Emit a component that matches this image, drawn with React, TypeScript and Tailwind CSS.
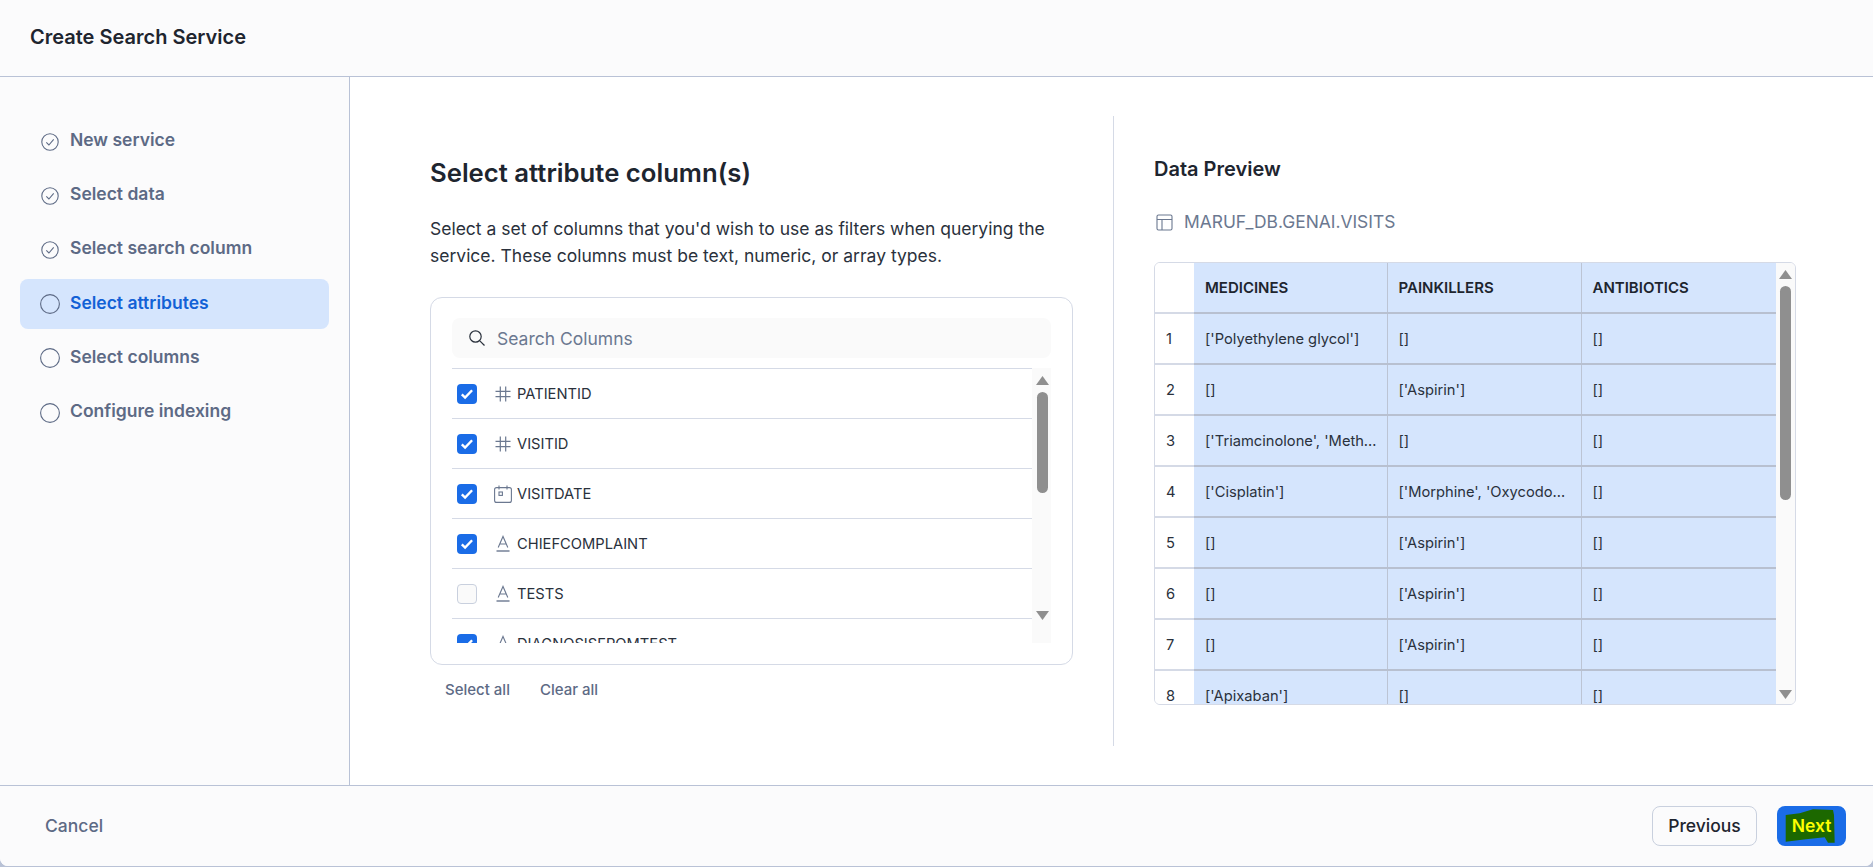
const sans = "font-['Inter',sans-serif]";

const steps = [
  { label: "New service", done: true },
  { label: "Select data", done: true },
  { label: "Select search column", done: true },
  { label: "Select attributes", active: true },
  { label: "Select columns" },
  { label: "Configure indexing" },
];

const columns = [
  { name: "PATIENTID", type: "num", checked: true },
  { name: "VISITID", type: "num", checked: true },
  { name: "VISITDATE", type: "date", checked: true },
  { name: "CHIEFCOMPLAINT", type: "text", checked: true },
  { name: "TESTS", type: "text", checked: false },
  { name: "DIAGNOSISFROMTEST", type: "text", checked: true },
];

const rows = [
  ["['Polyethylene glycol']", "[]", "[]"],
  ["[]", "['Aspirin']", "[]"],
  ["['Triamcinolone', 'Methylprednisolone']", "[]", "[]"],
  ["['Cisplatin']", "['Morphine', 'Oxycodone']", "[]"],
  ["[]", "['Aspirin']", "[]"],
  ["[]", "['Aspirin']", "[]"],
  ["[]", "['Aspirin']", "[]"],
  ["['Apixaban']", "[]", "[]"],
];

function StepIcon({ done }: { done?: boolean }) {
  if (done) {
    return (
      <svg width="20" height="20" viewBox="0 0 20 20" fill="none" className="mt-[3px] shrink-0">
        <circle cx="10" cy="10" r="8.2" stroke="#5d6a85" strokeWidth="1.1" />
        <path d="M6.3 10.4l2.6 2.6 4.8-5.6" stroke="#5d6a85" strokeWidth="1.1" />
      </svg>
    );
  }
  return (
    <svg width="20" height="20" viewBox="0 0 20 20" fill="none" className="mt-[3px] shrink-0">
      <circle cx="10" cy="10" r="9.4" stroke="#5d6a85" strokeWidth="1.1" />
    </svg>
  );
}

function ColumnIcon({ type }: { type: string }) {
  if (type === "num") {
    return (
      <svg width="18" height="18" viewBox="0 0 18 18" fill="none" stroke="#6b7890" strokeWidth="1.2">
        <path d="M6.3 1.5v15M11.7 1.5v15M1.5 6.3h15M1.5 11.7h15" />
      </svg>
    );
  }
  if (type === "date") {
    return (
      <svg width="18" height="18" viewBox="0 0 18 18" fill="none" stroke="#6b7890" strokeWidth="1.1">
        <rect x="0.6" y="2.6" width="16.8" height="14.8" rx="2" />
        <path d="M5 0.5v4M13 0.5v4" />
        <rect x="5" y="7" width="3.4" height="3.4" />
      </svg>
    );
  }
  return (
    <svg width="18" height="18" viewBox="0 0 18 18" fill="none" stroke="#6b7890" strokeWidth="1.1">
      <path d="M4.2 12.5L9 1.5l4.8 11M5.8 9h6.4" />
      <path d="M2.5 16h13" strokeWidth="1.4" />
    </svg>
  );
}

function Checkbox({ checked }: { checked: boolean }) {
  if (!checked) {
    return <span className="h-5 w-5 shrink-0 rounded-[4px] border border-[#c9d0de] bg-[#fafafa]" />;
  }
  return (
    <span className="flex h-5 w-5 shrink-0 items-center justify-center rounded-[4px] bg-[#1a6ce7]">
      <svg width="16" height="16" viewBox="0 0 16 16" fill="none" stroke="white" strokeWidth="2.4">
        <path d="M2.8 8.4l3.3 3.2 7-7.4" />
      </svg>
    </span>
  );
}

interface ScrollbarProps {
  left: number;
  arrowTop: number;
  thumbTop: number;
  thumbHeight: number;
  downBottom: number;
}

function Scrollbar({ left, arrowTop, thumbTop, thumbHeight, downBottom }: ScrollbarProps) {
  return (
    <div className="relative h-full w-[19px] shrink-0 bg-[#fafafa]">
      <svg width="13" height="9" viewBox="0 0 13 9" className="absolute" style={{ left, top: arrowTop }}>
        <path d="M6.5 0L13 9H0z" fill="#8f8f8f" />
      </svg>
      <div
        className="absolute w-[11px] rounded-full bg-[#8f8f8f]"
        style={{ left: left + 1, top: thumbTop, height: thumbHeight }}
      />
      <svg width="13" height="9" viewBox="0 0 13 9" className="absolute" style={{ left, bottom: downBottom }}>
        <path d="M0 0h13L6.5 9z" fill="#8f8f8f" />
      </svg>
    </div>
  );
}

function ColumnPicker() {
  return (
    <div>
      <div className="h-[368px] rounded-xl border border-[#d5dae6] px-[21px] pt-5">
        <div className="flex h-10 items-center gap-[11px] rounded-lg bg-[#fafafa] pl-4">
          <svg width="18" height="18" viewBox="0 0 18 18" fill="none" stroke="#2a313c" strokeWidth="1.2">
            <circle cx="7.5" cy="7.5" r="5.7" />
            <path d="M11.8 11.8l4.7 4.7" />
          </svg>
          <span className="mt-[2px] text-[17.5px] text-[#6b7890]">Search Columns</span>
        </div>
        <div className="mt-[10px] flex h-[275px] overflow-hidden">
          <div className="min-w-0 flex-1">
            {columns.map((c) => (
              <div key={c.name} className="flex h-[50px] items-center border-t border-[#d5dae6] pl-[5px]">
                <Checkbox checked={c.checked} />
                <span className="ml-[17px] flex w-[18px] justify-center">
                  <ColumnIcon type={c.type} />
                </span>
                <span className="mt-[2px] ml-[5px] text-[14.7px] text-[#2a313c]">{c.name}</span>
              </div>
            ))}
          </div>
          <Scrollbar left={4} arrowTop={8} thumbTop={24} thumbHeight={101} downBottom={23} />
        </div>
      </div>
      <div className="mt-[14px] flex gap-[30px] pl-[15px] text-[15px] font-medium text-[#5d6a85]">
        <span>Select all</span>
        <span>Clear all</span>
      </div>
    </div>
  );
}

function DataTable() {
  return (
    <div className="flex h-[443px] w-[642px] overflow-hidden rounded-md border border-[#d5dae6]">
      <div className="min-w-0 flex-1 overflow-hidden">
        <table className="w-[621px] table-fixed border-collapse text-[14.7px] text-[#2a313c]">
          <colgroup>
            <col className="w-[39px]" />
            <col className="w-[193px]" />
            <col className="w-[194px]" />
            <col className="w-[195px]" />
          </colgroup>
          <thead>
            <tr className="h-[50px]">
              <th className="border-b-2 border-[#d5dae6] bg-white" />
              {["MEDICINES", "PAINKILLERS", "ANTIBIOTICS"].map((h) => (
                <th
                  key={h}
                  className="border-r border-b-2 border-r-[#bcc4d4] border-b-[#b8c0d0] bg-[#d5e5fd] px-[11px] pt-[2px] text-left text-[15px] font-semibold text-[#1e252f] last:border-r-0"
                >
                  {h}
                </th>
              ))}
            </tr>
          </thead>
          <tbody>
            {rows.map((row, i) => (
              <tr key={i} className="h-[51px]">
                <td className="border-b-2 border-[#d5dae6] bg-white pt-[2px] pl-[11px]">{i + 1}</td>
                {row.map((cell, j) => (
                  <td
                    key={j}
                    className={`truncate border-r border-b-2 border-r-[#bcc4d4] border-b-[#b8c0d0] bg-[#d5e5fd] pt-[2px] pl-[11px] last:border-r-0 ${
                      j === 0 ? "pr-[8px]" : "pr-[11px]"
                    }`}
                  >
                    {cell}
                  </td>
                ))}
              </tr>
            ))}
          </tbody>
        </table>
      </div>
      <Scrollbar left={3} arrowTop={7} thumbTop={23} thumbHeight={214} downBottom={5} />
    </div>
  );
}

export default function App() {
  return (
    <div className={`flex h-[867px] w-[1873px] flex-col overflow-hidden bg-[#b9c2d6] pb-[1px] ${sans}`}>
      <div className="flex flex-1 flex-col overflow-hidden rounded-b-lg bg-white">
        <header className="flex h-[77px] shrink-0 items-center border-b border-[#b9c2d6] bg-[#fbfbfc] pb-[3px] pl-[30px]">
          <h1 className="text-xl font-semibold text-[#1e252f]">Create Search Service</h1>
        </header>

        <div className="flex min-h-0 flex-1">
          <aside className="w-[350px] shrink-0 border-r border-[#b9c2d6] bg-[#fbfbfc] pt-[39.6px] pl-5 pr-5">
            {steps.map((s) => (
              <div
                key={s.label}
                className={`mb-[4.2px] flex h-[50px] items-center gap-[10px] rounded-lg pb-[3px] pl-[20px] text-[17.5px] font-semibold ${
                  s.active ? "bg-[#d5e5fd] text-[#1261d6]" : "text-[#5d6a85]"
                }`}
              >
                <StepIcon done={s.done} />
                <span>{s.label}</span>
              </div>
            ))}
          </aside>

          <main className="flex min-w-0 flex-1 py-[39px]">
            <section className="w-[764px] shrink-0 border-r border-[#d5dae6] pr-[40px] pl-[80px] pt-[41px]">
              <h2 className="text-[25.7px] leading-8 font-semibold text-[#1e252f]">Select attribute column(s)</h2>
              <p className="mt-[26px] text-[17.5px] leading-[27px] text-[#2a313c]">
                Select a set of columns that you'd wish to use as filters when querying the service. These columns must
                be text, numeric, or array types.
              </p>
              <div className="mt-[28px]">
                <ColumnPicker />
              </div>
            </section>

            <section className="flex-1 pl-[40px] pt-[39px]">
              <h3 className="text-[20px] leading-7 font-semibold text-[#1e252f]">Data Preview</h3>
              <div className="mt-[27px] ml-[2px] flex items-center gap-[11px] text-[17.4px] leading-6 text-[#6b7890]">
                <svg width="17" height="17" viewBox="0 0 17 17" fill="none" stroke="#6b7890" strokeWidth="1.1">
                  <rect x="1" y="1" width="15" height="15" rx="1.5" />
                  <path d="M1 5.5h15M6 5.5V16" />
                </svg>
                <span>MARUF_DB.GENAI.VISITS</span>
              </div>
              <div className="mt-[28px]">
                <DataTable />
              </div>
            </section>
          </main>
        </div>

        <footer className="flex h-[81px] shrink-0 items-center justify-between border-t border-[#b9c2d6] bg-[#fbfbfc] pr-[27px] pl-[45px]">
          <span className="text-[17.5px] font-medium text-[#5d6a85]">Cancel</span>
          <div className="flex gap-5">
            <button className="h-10 w-[105px] rounded-lg border border-[#c9d0de] text-[17.5px] font-medium text-[#1e252f]">
              Previous
            </button>
            <button className="relative h-10 w-[69px] rounded-lg bg-[#1a6ce7] text-[17.5px] font-semibold">
              <svg width="69" height="40" viewBox="0 0 69 40" className="absolute top-0 left-0">
                <path d="M8.7 9L22.7 7.3L36 3.3L56 4L57 9L57.7 36.7H51L47.7 31.3L29 33.3L8.7 35.7Z" fill="#1c6800" />
              </svg>
              <span className="relative text-[#ffff00]">Next</span>
            </button>
          </div>
        </footer>
      </div>
    </div>
  );
}
